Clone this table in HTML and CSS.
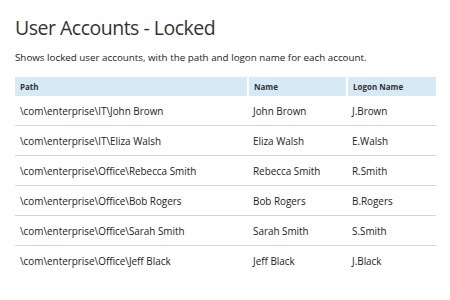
FILE: index.html
```html
<!DOCTYPE html>
<html lang="en">
<head>
    <meta charset="UTF-8">
    <title>User Accounts - Locked</title>
    <link rel="stylesheet" href="styles.css">
</head>
<body>
    <h1 class="title">User Accounts - Locked</h1>
    <p class="desc">Shows locked user accounts, with the path and logon name for each account.</p>

    <table class="accounts">
        <thead>
            <tr>
                <th class="col-path">Path</th>
                <th class="col-name">Name</th>
                <th class="col-logon">Logon Name</th>
            </tr>
        </thead>
        <tbody>
            <tr>
                <td>\com\enterprise\IT\John Brown</td>
                <td>John Brown</td>
                <td>J.Brown</td>
            </tr>
            <tr>
                <td>\com\enterprise\IT\Eliza Walsh</td>
                <td>Eliza Walsh</td>
                <td>E.Walsh</td>
            </tr>
            <tr>
                <td>\com\enterprise\Office\Rebecca Smith</td>
                <td>Rebecca Smith</td>
                <td>R.Smith</td>
            </tr>
            <tr>
                <td>\com\enterprise\Office\Bob Rogers</td>
                <td>Bob Rogers</td>
                <td>B.Rogers</td>
            </tr>
            <tr>
                <td>\com\enterprise\Office\Sarah Smith</td>
                <td>Sarah Smith</td>
                <td>S.Smith</td>
            </tr>
            <tr>
                <td>\com\enterprise\Office\Jeff Black</td>
                <td>Jeff Black</td>
                <td>J.Black</td>
            </tr>
        </tbody>
    </table>
</body>
</html>
```

FILE: styles.css
```css
body {
    font-family: "Open Sans", Arial, sans-serif;
    color: #222;
    background: #fff;
    margin: 0;
    padding: 14px 15px 0 15px;
}
.title {
    font-size: 19.5px;
    font-weight: 400;
    letter-spacing: -0.5px;
    color: #333;
    margin: 0;
    line-height: 27px;
}
.desc {
    font-size: 9.8px;
    margin: 11px 0 13px 0;
    line-height: 12px;
}
.accounts {
    width: 421px;
    border-collapse: collapse;
    font-size: 9.9px;
}
.accounts th {
    background: #d6eaf5;
    text-align: left;
    font-weight: 700;
    font-size: 8px;
    color: #333;
    height: 19px;
    padding: 0 0 0 5px;
    border-left: 2px solid #fff;
}
.accounts th:first-child {
    border-left: none;
}
.col-path {
    width: 227px;
}
.col-name {
    width: 92px;
}
.accounts td {
    height: 29px;
    padding: 0 0 0 5px;
    border-bottom: 1px solid #d4d4d4;
}
.accounts tbody tr:last-child td {
    border-bottom: none;
}
```
